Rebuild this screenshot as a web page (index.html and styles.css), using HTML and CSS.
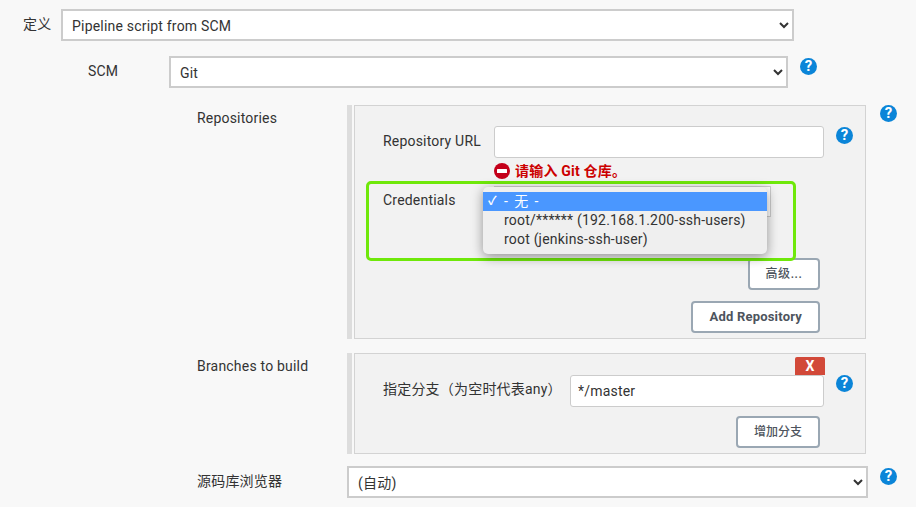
FILE: index.html
```html
<!DOCTYPE html>
<html lang="en">
<head>
  <meta charset="UTF-8" />
  <title>Pipeline SCM</title>
  <link rel="stylesheet" href="styles.css">
</head>
<body>
  <div class="form">
    <div class="row row-def">
      <label class="label">定义</label>
      <select class="select"><option>Pipeline script from SCM</option></select>
    </div>

    <div class="row row-scm">
      <label class="label">SCM</label>
      <select class="select"><option>Git</option></select>
      <span class="help">?</span>
    </div>

    <div class="row row-repos">
      <label class="label">Repositories</label>
      <div class="panel">
        <div class="field">
          <label class="field-label">Repository URL</label>
          <input class="input" type="text">
          <span class="help">?</span>
        </div>
        <div class="error">
          <svg class="error-icon" viewBox="0 0 16 16" width="16" height="16">
            <circle cx="8" cy="8" r="8" fill="#c4001a"/>
            <rect x="3" y="6" width="10" height="4" rx="0.5" fill="#fff"/>
          </svg>
          <span>请输入 Git 仓库。</span>
        </div>
        <div class="field field-creds">
          <label class="field-label">Credentials</label>
          <select class="select select-creds"><option></option></select>
        </div>
        <div class="highlight"></div>
        <ul class="dropdown">
          <li class="selected"><span class="check">✓</span>- 无 -</li>
          <li>root/****** (192.168.1.200-ssh-users)</li>
          <li>root (jenkins-ssh-user)</li>
        </ul>
        <div class="actions actions-adv"><button class="btn btn-adv">高级...</button></div>
        <div class="actions actions-add"><button class="btn btn-bold">Add Repository</button></div>
      </div>
      <span class="help">?</span>
    </div>

    <div class="row row-branches">
      <label class="label">Branches to build</label>
      <div class="panel panel-branch">
        <div class="delete-line"><button class="btn-delete">X</button></div>
        <div class="field">
          <label class="field-label branch-label">指定分支（为空时代表any）</label>
          <input class="input" type="text" value="*/master">
          <span class="help">?</span>
        </div>
        <div class="actions actions-branch"><button class="btn">增加分支</button></div>
      </div>
    </div>

    <div class="row row-browser">
      <label class="label">源码库浏览器</label>
      <select class="select"><option>(自动)</option></select>
      <span class="help">?</span>
    </div>
  </div>
</body>
</html>
```

FILE: styles.css
```css
* {
  margin: 0;
  padding: 0;
  box-sizing: border-box;
}
html, body {
  height: 507px;
  overflow: hidden;
}
body {
  background: #f8f8f8;
  color: #333;
  font-family: Roboto, "Noto Sans CJK SC", sans-serif;
  font-size: 14px;
  line-height: 18px;
  letter-spacing: 0.2px;
}
.form {
  padding-top: 9px;
}
.row {
  display: flex;
  align-items: flex-start;
}
.label {
  display: block;
  flex: none;
  padding-top: 6px;
}
.select {
  display: block;
  height: 32px;
  padding: 1px 5px 0;
  border: 2px solid #ccc;
  border-radius: 0;
  background: #fff;
  color: #333;
  font: inherit;
  letter-spacing: inherit;
}
.input {
  display: block;
  height: 32px;
  padding: 0 7px;
  border: 1px solid #ccc;
  border-radius: 3px;
  background: #fff;
  color: #333;
  font: inherit;
  letter-spacing: inherit;
}
.help {
  display: block;
  flex: none;
  width: 17px;
  height: 17px;
  border-radius: 50%;
  background: #0b85d8;
  color: #fff;
  font-size: 15px;
  font-weight: 700;
  line-height: 17px;
  letter-spacing: 0;
  text-align: center;
}

.row-def {
  padding-left: 23px;
}
.row-def .label {
  width: 38px;
}
.row-def .select {
  width: 733px;
}

.row-scm {
  margin-top: 15px;
  padding-left: 88px;
}
.row-scm .label {
  width: 81px;
}
.row-scm .select {
  width: 619px;
}
.row-scm .help {
  margin: 2px 0 0 12px;
}

.row-repos {
  margin-top: 17px;
  padding-left: 197px;
}
.row-repos .label,
.row-branches .label,
.row-browser .label {
  width: 150px;
}
.row-repos .label,
.row-branches .label {
  padding-top: 4px;
}
.row-repos > .help {
  margin: 0 0 0 14px;
}

.panel {
  position: relative;
  width: 512px;
  margin-left: 7px;
  padding: 20px 12px 5px 28px;
  border: 1px solid #d3d3d3;
  background: #f2f2f2;
  box-shadow: -2px 0 0 #f8f8f8, -7px 0 0 #ddd;
}

.field {
  display: flex;
  align-items: flex-start;
}
.field-label {
  flex: none;
  width: 111px;
  padding-top: 6px;
}
.field .input {
  width: 331px;
}
.field .help {
  margin: 1px 0 0 12px;
}
.error {
  display: flex;
  align-items: center;
  gap: 5px;
  height: 16px;
  margin: 5px 0 0 111px;
  color: #cc0000;
  font-weight: 700;
}
.error-icon {
  flex: none;
}
.field-creds {
  margin-top: 7px;
}
.field-creds .field-label {
  padding-top: 5px;
}
.select-creds {
  width: 277px;
  height: 31px;
  border-width: 1px;
}

.highlight {
  position: absolute;
  left: 11px;
  top: 75px;
  width: 430px;
  height: 80px;
  border: 3px solid #6fe80a;
  border-radius: 5px;
}
.dropdown {
  position: absolute;
  left: 128px;
  top: 81px;
  width: 284px;
  padding: 5px 0;
  border-radius: 5px;
  background: #efefef;
  box-shadow: 0 3px 12px rgba(0, 0, 0, 0.4);
  list-style: none;
}
.dropdown li {
  position: relative;
  height: 19px;
  padding-left: 21px;
  line-height: 19px;
}
.dropdown .selected {
  background: #4a97ff;
  color: #fff;
  letter-spacing: 1.4px;
}
.check {
  position: absolute;
  left: 5px;
  font-size: 12px;
  font-weight: 700;
  letter-spacing: 0;
}

.actions {
  display: flex;
  justify-content: flex-end;
  margin-right: 33px;
}
.actions-adv {
  margin-top: 41px;
}
.actions-add {
  margin-top: 11px;
}
.actions-branch {
  margin-top: 9px;
}
.btn {
  height: 32px;
  padding: 0 16px;
  border: 2px solid #9aa7b3;
  border-radius: 4px;
  background: #fff;
  color: #4d545d;
  font: inherit;
  font-size: 12px;
  font-weight: 500;
  letter-spacing: 0;
}
.btn-adv {
  width: 72px;
  padding: 0;
  letter-spacing: 0.6px;
}
.btn-bold {
  font-size: 13px;
  font-weight: 700;
  letter-spacing: 0.2px;
}

.row-branches {
  margin-top: 14px;
  padding-left: 197px;
}
.panel-branch {
  padding-top: 3px;
}
.delete-line {
  display: flex;
  justify-content: flex-end;
  margin-right: 28px;
}
.btn-delete {
  width: 30px;
  height: 18px;
  border: 0;
  border-radius: 2px 2px 0 0;
  background: #d24939;
  color: #fff;
  font: inherit;
  font-size: 14px;
  font-weight: 700;
}
.branch-label {
  width: 187px;
  padding-top: 5px;
}
.panel-branch .input {
  width: 255px;
}
.panel-branch .help {
  margin-top: 0;
}

.row-browser {
  margin-top: 12px;
  padding-left: 197px;
}
.row-browser .select {
  width: 521px;
}
.row-browser .help {
  margin: 2px 0 0 12px;
}
```
